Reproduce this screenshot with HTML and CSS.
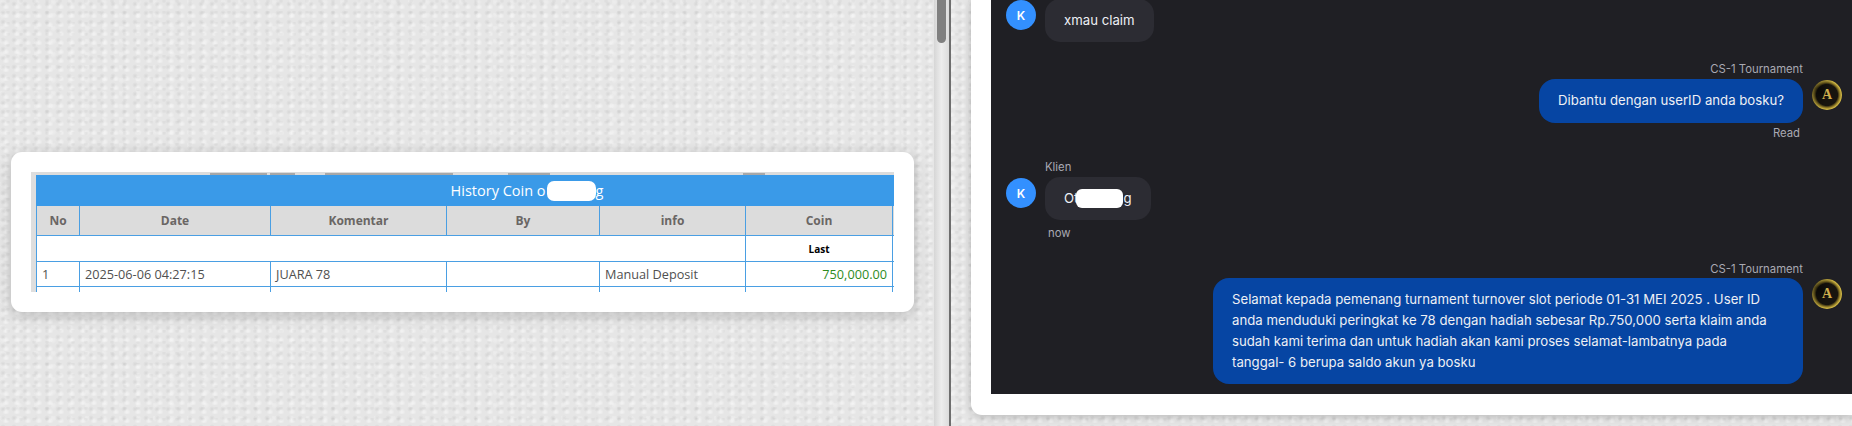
FILE: index.html
```html
<!DOCTYPE html>
<html lang="id">
<head>
  <meta charset="UTF-8">
  <meta name="viewport" content="width=device-width, initial-scale=1.0">
  <title>History Coin</title>
  <link rel="stylesheet" href="styles.css">
</head>
<body>
  <div class="left-pane">
    <div class="card">
      <div class="shot">
        <div class="cut-text">
          <span class="cut c1"></span><span class="cut c2"></span><span class="cut c3"></span><span class="cut c4"></span><span class="cut c5"></span>
        </div>
        <table class="coin-table">
          <colgroup>
            <col class="w-no"><col class="w-date"><col class="w-komentar"><col class="w-by"><col class="w-info"><col class="w-coin"><col class="w-rest">
          </colgroup>
          <thead>
            <tr><th colspan="7" class="title">History Coin o<span class="mask mask-title"></span>g</th></tr>
            <tr class="heads"><th>No</th><th>Date</th><th>Komentar</th><th>By</th><th>info</th><th>Coin</th><th></th></tr>
          </thead>
          <tbody>
            <tr class="sub"><td colspan="5"></td><td class="last">Last</td><td></td></tr>
            <tr><td>1</td><td>2025-06-06 04:27:15</td><td>JUARA 78</td><td></td><td>Manual Deposit</td><td class="coin">750,000.00</td><td></td></tr>
            <tr><td></td><td></td><td></td><td></td><td></td><td></td><td></td></tr>
          </tbody>
        </table>
      </div>
    </div>
  </div>

  <div class="scrollbar"><div class="thumb"></div></div>
  <div class="divider"></div>

  <div class="right-pane">
    <div class="chat-card">
      <div class="chat">
        <div class="msg msg-first">
          <div class="avatar">K</div>
          <div class="body">
            <div class="bubble">xmau claim</div>
          </div>
        </div>

        <div class="msg me msg-second">
          <div class="body">
            <div class="name">CS-1 Tournament</div>
            <div class="bubble">Dibantu dengan userID anda bosku?</div>
            <div class="meta">Read</div>
          </div>
          <div class="avatar gold"><span>A</span></div>
        </div>

        <div class="msg msg-third">
          <div class="avatar">K</div>
          <div class="body">
            <div class="name">Klien</div>
            <div class="bubble">Ot<span class="mask mask-chat"></span>g</div>
            <div class="meta now">now</div>
          </div>
        </div>

        <div class="msg me msg-fourth">
          <div class="body">
            <div class="name">CS-1 Tournament</div>
            <div class="bubble long">Selamat kepada pemenang turnament turnover slot periode 01-31 MEI 2025 . User ID anda menduduki peringkat ke 78 dengan hadiah sebesar Rp.750,000 serta klaim anda sudah kami terima dan untuk hadiah akan kami proses selamat-lambatnya pada tanggal- 6 berupa saldo akun ya bosku</div>
          </div>
          <div class="avatar gold"><span>A</span></div>
        </div>
      </div>
    </div>
  </div>
</body>
</html>
```
FILE: styles.css
```css
html, body { margin: 0; height: 426px; overflow: hidden; }
body {
  display: flex;
  font-family: "Inter", "Noto Sans", sans-serif;
  background-color: #e6e6e6;
  background-image:
    radial-gradient(circle at 3px 4px, rgba(0,0,0,0.07) 0, rgba(0,0,0,0.03) 1.5px, transparent 3px),
    radial-gradient(circle at 8px 1px, rgba(0,0,0,0.05) 0, transparent 2.5px),
    radial-gradient(circle at 6px 7px, rgba(255,255,255,0.55) 0, transparent 3.5px),
    radial-gradient(circle at 2px 2px, rgba(255,255,255,0.3) 0, transparent 4px);
  background-size: 11px 9px, 13px 11px, 11px 9px, 17px 13px;
}

.left-pane { width: 934px; flex: none; padding: 152px 0 0 11px; box-sizing: border-box; }
.card { width: 903px; height: 160px; padding: 20px; box-sizing: border-box; background: #fff; border-radius: 11px; box-shadow: 0 3px 14px rgba(0,0,0,0.22); }
.shot { position: relative; width: 863px; height: 120px; overflow: hidden; background: linear-gradient(#dcdcdc 0, #dcdcdc 3px, #fff 3px); padding-left: 5px; padding-top: 3px; box-sizing: border-box; }
.shot::before { content: ""; position: absolute; left: 0; top: 0; width: 5px; height: 100%; background: #dedede; }
.cut-text { position: absolute; left: 0; top: 0; width: 100%; height: 3px; }
.cut { position: absolute; top: 1px; height: 2px; background: #a8a8a8; }
.c1 { left: 179px; width: 57px; }
.c2 { left: 239px; width: 25px; }
.c3 { left: 294px; width: 128px; }
.c4 { left: 477px; width: 42px; }
.c5 { left: 712px; width: 22px; }

.coin-table { width: 983px; table-layout: fixed; border-collapse: collapse; font-family: "Open Sans", "Noto Sans", sans-serif; font-size: 12.7px; color: #505050; }
.w-no { width: 43px; }
.w-date { width: 191px; }
.w-komentar { width: 176px; }
.w-by { width: 153px; }
.w-info { width: 146px; }
.w-coin { width: 147px; }
.w-rest { width: 127px; }
.coin-table th, .coin-table td { border: 1px solid #4a9fe3; padding: 0 5px; height: 25px; box-sizing: border-box; }
.coin-table th { background: #dcdcdc; color: #6a6664; font-size: 12px; font-weight: 700; height: 30px; text-align: center; }
.coin-table th.title { background: #3a9ae8; border-color: #3a9ae8; color: #fff; font-size: 14.5px; font-weight: 400; height: 30px; padding: 0 2px 0 0; }
.coin-table td { white-space: nowrap; }
.coin-table .sub td { height: 26px; }
.coin-table .last { text-align: center; color: #000; font-size: 10px; font-weight: 700; }
.coin-table .coin { text-align: right; color: #2e8b1e; }

.mask { display: inline-block; background: #fff; }
.mask-title { width: 49px; height: 20px; margin-left: 1px; border-radius: 7px; vertical-align: -5px; }
.mask-chat { width: 47px; height: 19px; margin-left: -2px; border-radius: 6px; vertical-align: -5px; }

.scrollbar { width: 15px; flex: none; height: 100%; background: linear-gradient(90deg, #d6d6d6, #ededed 50%, #dcdcdc); position: relative; }
.thumb { width: 9px; height: 43px; margin-left: 3px; background: #808080; border-radius: 0 0 5px 5px; }
.divider { width: 2px; flex: none; background: #6e6e6e; }

.right-pane { flex: 1; padding-left: 20px; min-width: 0; }
.chat-card { height: 415px; padding-left: 20px; box-sizing: border-box; background: #fff; border-radius: 0 0 0 11px; box-shadow: 0 2px 10px rgba(0,0,0,0.2); }
.chat { height: 394px; overflow: hidden; box-sizing: border-box; padding: 0 10px 0 15px; background: #1f1f24; font-size: 13.2px; color: #eef0f5; }

.msg { display: flex; gap: 9px; }
.msg.me { justify-content: flex-end; }
.msg-first { margin-top: -1px; }
.msg-second { margin-top: 20px; }
.msg-third { margin-top: 20px; }
.msg-fourth { margin-top: 22px; }
.body { display: flex; flex-direction: column; align-items: flex-start; }
.me .body { align-items: flex-end; }

.avatar { width: 30px; height: 30px; flex: none; border-radius: 50%; background: #3390ff; color: #fff; font-size: 12px; font-weight: 600; display: flex; align-items: center; justify-content: center; margin-top: 1px; }
.msg-third .avatar { margin-top: 18px; }
.msg-second .avatar { margin-top: 18px; }
.msg-fourth .avatar { margin-top: 17px; }
.avatar.gold {
  background:
    conic-gradient(from 300deg, rgba(0,0,0,0.55), transparent 25%, transparent 70%, rgba(0,0,0,0.55)),
    radial-gradient(circle, #17140e 0, #17140e 50%, #8f7a26 60%, #d2b947 68%, #6b5a1a 78%, #2f2b20 92%, #26251f 100%);
  color: #cfae4c;
  font-family: "Liberation Serif", serif;
  font-size: 14px;
  font-weight: 700;
}

.name { height: 14px; margin-bottom: 3px; font-size: 11.3px; line-height: 14px; color: #a9a9b2; }
.me .name { margin-bottom: 2px; }
.msg-second .name { margin-bottom: 3px; }
.bubble { padding: 11px 19px; line-height: 21px; background: #2c2c33; border-radius: 15px; white-space: nowrap; }
.msg-second .bubble { padding-bottom: 12px; }
.me .bubble { background: #0645a3; border-radius: 16px; }
.bubble.long { width: 590px; padding-right: 32px; box-sizing: border-box; white-space: normal; }
.meta { height: 14px; margin-top: 3px; padding-right: 3px; font-size: 11.3px; line-height: 14px; color: #a9a9b2; }
.meta.now { margin-top: 6px; padding-left: 3px; }
```
